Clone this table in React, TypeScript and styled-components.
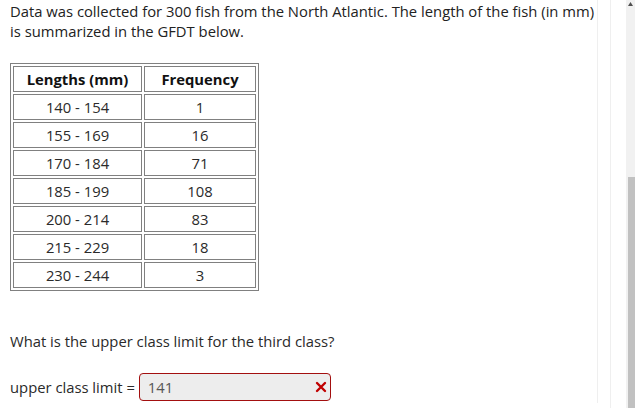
import React from "react";
import styled, { createGlobalStyle } from "styled-components";

const Global = createGlobalStyle`
  html, body { margin: 0; padding: 0; background: #fff; }
  body { font-family: "Open Sans", "Liberation Sans", sans-serif; font-size: 14.8px; color: #222; }
`;

const Page = styled.div`
  display: flex;
  width: 635px;
  height: 408px;
  overflow: hidden;
`;

const Content = styled.div`
  flex: 0 0 598px;
  min-width: 0;
  box-sizing: border-box;
  height: 403px;
  padding: 1px 0 0 10px;
  border-right: 1px solid #efefef;
`;

const Gutter = styled.div`
  flex: 0 0 12px;
  border-right: 1px solid #efefef;
`;

const Spacer = styled.div`
  flex: 1;
`;

const Track = styled.div`
  flex: 0 0 9px;
  background: #f1f1f1;
  display: flex;
  flex-direction: column;
  align-items: flex-end;
`;

const ArrowBox = styled.div`
  height: 177px;
  width: 9px;
  display: flex;
  justify-content: center;
  padding-top: 2px;
  box-sizing: border-box;
`;

const Thumb = styled.div`
  flex: 1;
  width: 7px;
  background: #c1c1c1;
`;

const Para = styled.p`
  margin: 0;
  width: 594px;
  line-height: 20px;
`;

const Table = styled.table`
  margin-top: 22px;
  border: 1px solid #808080;
  border-spacing: 2px;
  border-collapse: separate;
`;

const Cell = styled.td<{ $w: number; $head?: boolean }>`
  box-sizing: border-box;
  width: ${(p) => p.$w}px;
  border: 1px solid #808080;
  padding: 2px 0;
  line-height: 20px;
  text-align: center;
  color: ${(p) => (p.$head ? "#111" : "#2a2a2a")};
  font-weight: ${(p) => (p.$head ? 700 : 400)};
`;

const Question = styled.p`
  margin: 40px 0 0 0;
  line-height: 20px;
  color: #2a2a2a;
`;

const AnswerRow = styled.div`
  margin-top: 22px;
  display: flex;
  align-items: center;
  gap: 4px;
  color: #2a2a2a;
`;

const Field = styled.div`
  box-sizing: border-box;
  width: 192px;
  height: 28px;
  border: 1px solid #a30f0f;
  border-radius: 4px;
  background: #ededed;
  display: flex;
  align-items: center;
  justify-content: space-between;
  padding: 0 3px 0 8px;
  color: #555;
`;

const rows: [string, string][] = [
  ["140 - 154", "1"],
  ["155 - 169", "16"],
  ["170 - 184", "71"],
  ["185 - 199", "108"],
  ["200 - 214", "83"],
  ["215 - 229", "18"],
  ["230 - 244", "3"],
];

export default function App() {
  return (
    <>
      <Global />
      <Page>
        <Content>
          <Para>
            Data was collected for 300 fish from the North Atlantic. The length of the fish (in mm) is
            summarized in the GFDT below.
          </Para>
          <Table>
            <tbody>
              <tr>
                <Cell $w={129} $head>Lengths (mm)</Cell>
                <Cell $w={112} $head>Frequency</Cell>
              </tr>
              {rows.map(([a, b]) => (
                <tr key={a}>
                  <Cell $w={129}>{a}</Cell>
                  <Cell $w={112}>{b}</Cell>
                </tr>
              ))}
            </tbody>
          </Table>
          <Question>What is the upper class limit for the third class?</Question>
          <AnswerRow>
            <span>upper class limit =</span>
            <Field>
              <span>141</span>
              <svg width="12" height="12" viewBox="0 0 12 12">
                <path d="M2 2 L10 10 M10 2 L2 10" stroke="#c00000" strokeWidth="2.4" strokeLinecap="round" />
              </svg>
            </Field>
          </AnswerRow>
        </Content>
        <Gutter />
        <Spacer />
        <Track>
          <ArrowBox>
            <svg width="5" height="4" viewBox="0 0 5 4">
              <path d="M2.5 0 L5 4 L0 4 Z" fill="#505050" />
            </svg>
          </ArrowBox>
          <Thumb />
        </Track>
      </Page>
    </>
  );
}
